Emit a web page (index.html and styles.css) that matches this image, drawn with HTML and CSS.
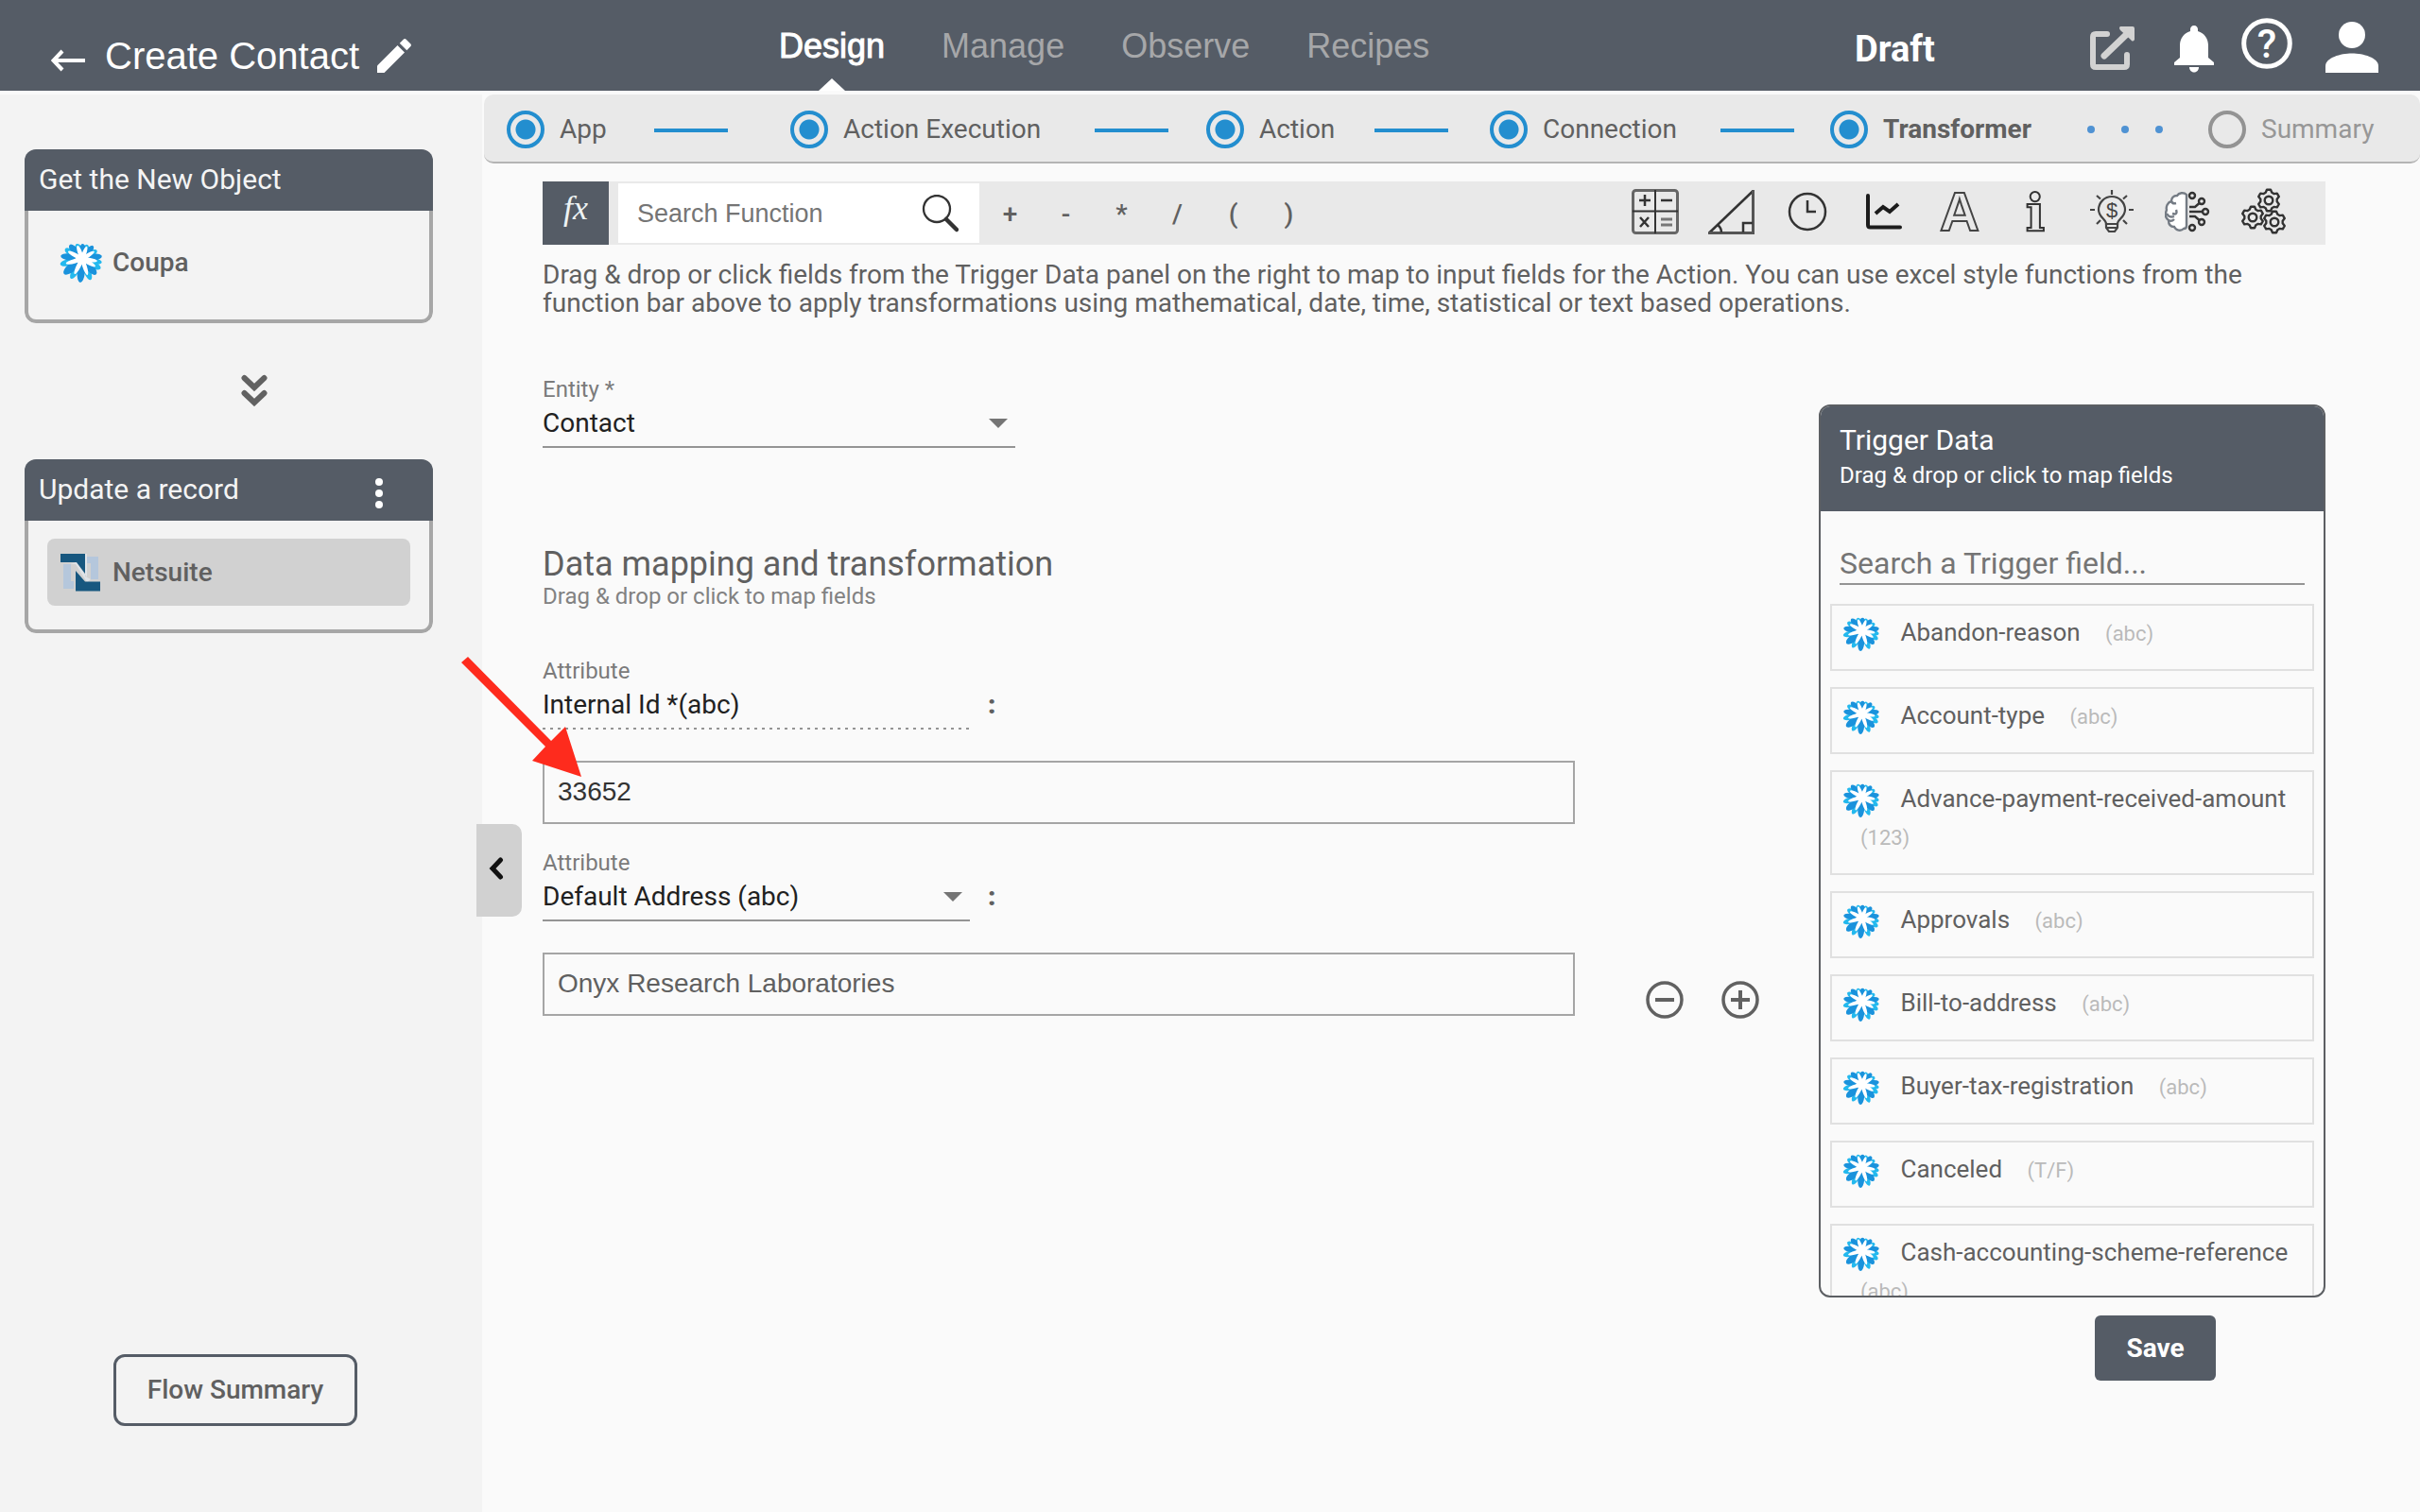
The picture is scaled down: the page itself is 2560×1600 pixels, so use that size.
FILE: index.html
```html
<!DOCTYPE html>
<html lang="en">
<head>
<meta charset="utf-8">
<title>Create Contact</title>
<link rel="stylesheet" href="styles.css">
</head>
<body>
<svg class="sprite" aria-hidden="true">
  <symbol id="coupa" viewBox="0 0 48 42">
    <g transform="translate(25 17)">
      <g fill="#23b9ee">
        <ellipse cy="-11" rx="3" ry="5" transform="rotate(20)"/>
        <ellipse cy="-12" rx="3" ry="6" transform="rotate(60)"/>
        <ellipse cy="-14" rx="3" ry="7" transform="rotate(100)"/>
        <ellipse cy="-14" rx="3.500" ry="8" transform="rotate(118)"/>
        <ellipse cy="-15" rx="3.500" ry="9" transform="rotate(158)"/>
        <ellipse cy="-15" rx="3.500" ry="9" transform="rotate(210)"/>
        <ellipse cy="-16" rx="3.500" ry="8" transform="rotate(256)"/>
        <ellipse cy="-14" rx="3.500" ry="7" transform="rotate(300)"/>
        <ellipse cy="-11" rx="3.500" ry="6" transform="rotate(340)"/>
      </g>
      <g fill="#1a92dc">
        <ellipse cy="-11" rx="3" ry="5" transform="rotate(2)"/>
        <ellipse cy="-12" rx="3" ry="6" transform="rotate(40)"/>
        <ellipse cy="-13" rx="3.500" ry="8" transform="rotate(82)"/>
        <ellipse cy="-13" rx="4" ry="9" transform="rotate(138)"/>
        <ellipse cy="-15" rx="4" ry="10" transform="rotate(185)"/>
        <ellipse cy="-15" rx="4.500" ry="10" transform="rotate(231)"/>
        <ellipse cy="-15" rx="3.500" ry="8" transform="rotate(278)"/>
        <ellipse cy="-13" rx="3.500" ry="7" transform="rotate(318)"/>
      </g>
      <g fill="#fff">
        <circle r="6"/>
        <ellipse cy="-6" rx="2.200" ry="8" transform="rotate(20)"/>
        <ellipse cy="-7" rx="2.200" ry="8" transform="rotate(58)"/>
        <ellipse cy="-7" rx="2.200" ry="9" transform="rotate(98)"/>
        <ellipse cy="-8" rx="2.300" ry="10" transform="rotate(162)"/>
        <ellipse cy="-7" rx="2.200" ry="9" transform="rotate(120)"/>
        <ellipse cy="-8" rx="2.300" ry="10" transform="rotate(207)"/>
        <ellipse cy="-8" rx="2.300" ry="10" transform="rotate(254)"/>
        <ellipse cy="-8" rx="2.300" ry="9" transform="rotate(298)"/>
        <ellipse cy="-7" rx="2.300" ry="8" transform="rotate(340)"/>
      </g>
    </g>
  </symbol>
  <symbol id="gear" viewBox="-13 -13 26 26">
    <path d="M2-11.3 3.3-8.2 5.4-6.9 8.8-7.4 10.8-3.9 8.7-1.2V1.2L10.8 3.9 8.8 7.4 5.4 6.9 3.3 8.2 2 11.3H-2L-3.3 8.2-5.4 6.9-8.8 7.4-10.8 3.9-8.7 1.2V-1.2L-10.8-3.9-8.8-7.4-5.4-6.9-3.3-8.2-2-11.3Z" fill="none" stroke="#333" stroke-width="2.400" stroke-linejoin="round"/>
    <circle r="4.3" fill="none" stroke="#333" stroke-width="2.400"/>
  </symbol>
</svg>

<header class="topbar">
  <div class="title-group">
    <a class="icon-link back" href="#" aria-label="Back"><svg width="36" height="24" viewBox="0 0 36 24"><path d="M36 12H3M12 2 2.500 12 12 22" fill="none" stroke="#fff" stroke-width="4"/></svg></a>
    <h1 class="title">Create Contact</h1>
    <button class="icon-button pencil" aria-label="Rename"><svg width="36" height="36" viewBox="0 0 36 36" fill="#fff"><path d="M0 28.500V36H7.500L29 14.500 21.500 7Z"/><path d="M35.200 8.300C36.200 7.300 36.200 6.300 35.200 5.300L30.700.8C29.700-.2 28.700-.2 27.700.8L23.800 4.700 31.300 12.200Z"/></svg></button>
  </div>
  <nav class="tabs">
    <a class="tab tab-active" href="#">Design</a>
    <a class="tab" href="#">Manage</a>
    <a class="tab" href="#">Observe</a>
    <a class="tab" href="#">Recipes</a>
  </nav>
  <div class="tools">
    <span class="status">Draft</span>
    <a class="icon-link open-link" href="#" aria-label="Open"><svg width="48" height="46" viewBox="0 0 48 46"><path d="M18 8H6Q3 8 3 11V40Q3 43 6 43H36Q39 43 39 40V30" fill="none" stroke="#d2d2d2" stroke-width="6" stroke-linecap="round"/><path d="M15 31 40 7" stroke="#d2d2d2" stroke-width="7" stroke-linecap="round"/><path d="M32 0H45Q47 0 47 2V14Q45 17 43 14L32 4Q30 1 32 0Z" fill="#d2d2d2"/></svg></a>
    <button class="icon-button bell" aria-label="Notifications"><svg width="42" height="50" viewBox="0 0 42 50" fill="#fff"><path d="M21 0C18.500 0 17 2 17 4V6C10 8 6 14 6 21V34L0 39V42H42V39L36 34V21C36 14 32 8 25 6V4C25 2 23.500 0 21 0Z"/><path d="M16 44H26C26 47 24 49.500 21 49.500S16 47 16 44Z"/></svg></button>
    <button class="icon-button help" aria-label="Help"><svg width="54" height="54" viewBox="0 0 54 54"><circle cx="27" cy="27" r="24.300" fill="none" stroke="#fff" stroke-width="5"/><text x="27" y="42" text-anchor="middle" class="help-mark">?</text></svg></button>
    <button class="icon-button user" aria-label="Account"><svg width="56" height="54" viewBox="0 0 56 54" fill="#fff"><circle cx="28" cy="14" r="14"/><path d="M0 54V47C0 38 16 33.500 28 33.500S56 38 56 47V54Z"/></svg></button>
  </div>
</header>

<div class="page">
  <aside class="sidebar">
    <section class="flow-card">
      <h2 class="flow-head">Get the New Object</h2>
      <div class="flow-body">
        <div class="app-chip"><svg class="app-logo" width="48" height="42"><use href="#coupa"/></svg>Coupa</div>
      </div>
    </section>
    <svg class="flow-arrow" width="28" height="34" viewBox="0 0 28 34"><path d="M3.500 4 14 14 24.500 4M3.500 20 14 30 24.500 20" fill="none" stroke="#616161" stroke-width="6" stroke-linecap="round"/></svg>
    <section class="flow-card">
      <h2 class="flow-head">Update a record
        <button class="icon-button menu" aria-label="Menu"><svg width="8" height="32" viewBox="0 0 8 32" fill="#fff"><circle cx="4" cy="4" r="4"/><circle cx="4" cy="16" r="4"/><circle cx="4" cy="28" r="4"/></svg></button>
      </h2>
      <div class="flow-body">
        <div class="app-chip app-chip-active"><svg class="app-logo" width="48" height="42" viewBox="-2 -1 48 42"><path d="M3 11H11V29H14V37H3ZM28 3H40V27H32V10H28Z" fill="#b5c7dc"/><path d="M10 11 16 11 28 30 32 27 26 24 26 0 28 0V25L17 9Z" fill="#dfe3e8"/><path d="M0 0H26V21L17 9H0ZM16 18 26 29.500H42V39.500H16Z" fill="#17577f"/></svg>Netsuite</div>
      </div>
    </section>
    <button class="summary-button">Flow Summary</button>
  </aside>

  <main class="main">
    <ol class="stepper">
      <li class="step"><span class="dot"></span>App</li>
      <li class="bar" aria-hidden="true"></li>
      <li class="step"><span class="dot"></span>Action Execution</li>
      <li class="bar" aria-hidden="true"></li>
      <li class="step"><span class="dot"></span>Action</li>
      <li class="bar" aria-hidden="true"></li>
      <li class="step"><span class="dot"></span>Connection</li>
      <li class="bar" aria-hidden="true"></li>
      <li class="step step-current"><span class="dot"></span>Transformer</li>
      <li class="pending" aria-hidden="true"><i></i><i></i><i></i></li>
      <li class="step step-todo"><span class="dot"></span>Summary</li>
    </ol>

    <div class="content">
      <div class="function-bar">
        <span class="fx">fx</span>
        <label class="function-search">
          <input type="text" placeholder="Search Function" aria-label="Search Function">
          <svg width="40" height="40" viewBox="0 0 40 40" fill="none" stroke="#333"><circle cx="17" cy="15" r="14" stroke-width="2.300"/><path d="M27 26 38 37" stroke-width="4.500" stroke-linecap="round"/></svg>
        </label>
        <div class="operators">
          <button>+</button><button>-</button><button>*</button><button>/</button><button>(</button><button>)</button>
        </div>
        <div class="categories">
          <button aria-label="Math"><svg width="50" height="48" viewBox="0 0 50 48" fill="none" stroke="#333" stroke-width="2"><rect x="1.500" y="1.500" width="47" height="45" rx="3" stroke="#666" stroke-width="3"/><path d="M25 1V47M1 23.500H49"/><path d="M8 12H20M14 6V18M31 12H43M9 30 18 40M18 30 9 40" stroke-width="2.500"/><path d="M31 32H43M31 38H43" stroke="#777" stroke-width="3"/></svg></button>
          <button aria-label="Trigonometry"><svg width="52" height="48" viewBox="0 0 52 48" fill="none" stroke="#333"><path d="M2 46.500 48.500 2" stroke-width="2.500"/><path d="M48.500 1V46.500H1" stroke="#555" stroke-width="3"/><path d="M38 46V36H48M11 38Q15 41 15 46" stroke-width="2.500"/></svg></button>
          <button aria-label="Date and time"><svg width="42" height="42" viewBox="0 0 42 42" fill="none" stroke="#333" stroke-width="2.500"><circle cx="21" cy="21" r="19"/><path d="M21 9V21H30"/></svg></button>
          <button aria-label="Statistics"><svg width="40" height="38" viewBox="0 0 40 38" fill="none" stroke="#1c1c1c" stroke-width="4" stroke-linecap="round"><path d="M3 2V33Q3 35.500 5.500 35.500H37"/><path d="M11 21 19 14 26 19 35 11" stroke-linecap="butt"/></svg></button>
          <button aria-label="Text"><svg width="50" height="66" viewBox="0 0 50 66"><text x="25" y="53" text-anchor="middle" class="letter-a">A</text></svg></button>
          <button aria-label="Information"><svg width="40" height="66" viewBox="0 0 40 66"><text x="20" y="53" text-anchor="middle" class="letter-i">i</text></svg></button>
          <button aria-label="Finance"><svg width="46" height="46" viewBox="0 0 46 46" fill="none" stroke="#444" stroke-width="2.200"><path d="M17 36C17 31 9 29 9 21A14 14 0 0 1 37 21C37 29 29 31 29 36Z"/><path d="M17 36V40L20 44H26L29 40V36M18 40H28M23 0V5M7 6 11 9.500M39 6 35 9.500M0 21H5M41 21H46M7 36 11 32M39 36 35 32"/><text x="23" y="29" text-anchor="middle" class="dollar">$</text></svg></button>
          <button aria-label="Intelligence"><svg width="48" height="44" viewBox="0 0 48 44" fill="none" stroke="#333" stroke-width="2.400"><path d="M23 4C20 1 15 2 13 5C9 5 7 8 7 11C3 12 1 17 2 20C0 25 1 29 4 31C4 35 6 38 10 38C12 42 17 43 20 40Q23 40 23 37Z" fill="#fff" stroke="#747b84"/><path d="M7 11Q8 14 12 13M2 24Q5 29 10 27M12 20Q14 26 8 24M10 30Q7 33 4 31" stroke="#747b84"/><circle cx="29" cy="5" r="3"/><circle cx="39" cy="11" r="3"/><circle cx="43" cy="22" r="3"/><circle cx="39" cy="33" r="3"/><circle cx="29" cy="39" r="3"/><path d="M26 17H32L36.500 13M26 22H40M26 27H32L36.500 31"/></svg></button>
          <button aria-label="Advanced"><svg width="50" height="50" viewBox="0 0 50 50"><use href="#gear" x="17" y="0" width="26" height="26"/><use href="#gear" x="0" y="18" width="26" height="26"/><use href="#gear" x="23" y="23" width="26" height="26"/></svg></button>
        </div>
      </div>
      <p class="hint">Drag &amp; drop or click fields from the Trigger Data panel on the right to map to input fields for the Action. You can use excel style functions from the function bar above to apply transformations using mathematical, date, time, statistical or text based operations.</p>

      <div class="columns">
        <form class="mapping">
          <div class="field field-wide">
            <label for="entity">Entity *</label>
            <div class="select"><select id="entity"><option>Contact</option></select></div>
          </div>
          <h2 class="section-title">Data mapping and transformation</h2>
          <p class="section-sub">Drag &amp; drop or click to map fields</p>

          <div class="attribute attribute-first">
            <div class="field">
              <label for="attr1">Attribute</label>
              <div class="select select-fixed"><select id="attr1" disabled><option>Internal Id *(abc)</option></select></div>
            </div>
            <span class="colon">:</span>
          </div>
          <div class="value-row">
            <input class="value value-dark" type="text" value="33652" aria-label="Internal Id value">
          </div>

          <div class="attribute">
            <div class="field">
              <label for="attr2">Attribute</label>
              <div class="select"><select id="attr2"><option>Default Address (abc)</option></select></div>
            </div>
            <span class="colon">:</span>
          </div>
          <div class="value-row">
            <input class="value" type="text" value="Onyx Research Laboratories" aria-label="Default Address value">
            <div class="row-actions">
              <button type="button" class="icon-button" aria-label="Remove"><svg width="40" height="40" viewBox="0 0 40 40" fill="none" stroke="#616161"><circle cx="20" cy="20" r="18" stroke-width="3.500"/><path d="M10 20H30" stroke-width="4"/></svg></button>
              <button type="button" class="icon-button" aria-label="Add"><svg width="40" height="40" viewBox="0 0 40 40" fill="none" stroke="#616161"><circle cx="20" cy="20" r="18" stroke-width="3.500"/><path d="M10 20H30M20 10V30" stroke-width="4"/></svg></button>
            </div>
          </div>
        </form>

        <div class="trigger-column">
          <section class="trigger">
            <header class="trigger-head">
              <h2>Trigger Data</h2>
              <p>Drag &amp; drop or click to map fields</p>
            </header>
            <input class="trigger-search" type="text" placeholder="Search a Trigger field..." aria-label="Search a Trigger field">
            <ul class="trigger-list">
              <li><svg width="42" height="36"><use href="#coupa"/></svg> <span>Abandon-reason</span> <small>(abc)</small></li>
              <li><svg width="42" height="36"><use href="#coupa"/></svg> <span>Account-type</span> <small>(abc)</small></li>
              <li><svg width="42" height="36"><use href="#coupa"/></svg> <span>Advance-payment-received-amount</span> <small>(123)</small></li>
              <li><svg width="42" height="36"><use href="#coupa"/></svg> <span>Approvals</span> <small>(abc)</small></li>
              <li><svg width="42" height="36"><use href="#coupa"/></svg> <span>Bill-to-address</span> <small>(abc)</small></li>
              <li><svg width="42" height="36"><use href="#coupa"/></svg> <span>Buyer-tax-registration</span> <small>(abc)</small></li>
              <li><svg width="42" height="36"><use href="#coupa"/></svg> <span>Canceled</span> <small>(T/F)</small></li>
              <li><svg width="42" height="36"><use href="#coupa"/></svg> <span>Cash-accounting-scheme-reference</span> <small>(abc)</small></li>
            </ul>
          </section>
          <button class="save">Save</button>
        </div>
      </div>
    </div>

    <button class="collapse" aria-label="Collapse sidebar"><svg width="16" height="24" viewBox="0 0 16 24"><path d="M12.500 3 4 12 12.500 21" fill="none" stroke="#111" stroke-width="5" stroke-linecap="round"/></svg></button>
    <svg class="pointer" width="127" height="127" viewBox="0 0 127 127"><path d="M0 6 7 0 95 89 110 74 127 127 75 110 89 95Z" fill="#fe2b1d"/></svg>
  </main>
</div>
</body>
</html>
```
FILE: styles.css
```css
* { box-sizing: border-box; }

body {
  margin: 0;
  min-height: 100vh;
  display: flex;
  flex-direction: column;
  background: #fafafa;
  color: #606060;
  font: 28px/32px Roboto, sans-serif;
}

h1, h2, p, ol, ul { margin: 0; padding: 0; font-weight: 400; }
ol, ul { list-style: none; }
button, input, select { font: inherit; color: inherit; }
button { border: 0; background: none; padding: 0; }
a { color: inherit; text-decoration: none; }
svg { display: block; }
input, select { min-width: 0; outline: 0; border-radius: 0; }
.sprite { position: absolute; width: 0; height: 0; }

/* Top bar */
.topbar {
  display: grid;
  grid-template-columns: 824fr 1138fr 598fr;
  height: 96px;
  margin-bottom: 4px;
  background: #555c66;
  color: #fff;
}
.title-group { display: flex; align-items: center; padding: 22px 0 0 54px; }
.title { margin: 0 19px 0 21px; font: 40px/44px "Liberation Sans", sans-serif; }
.back { padding-top: 10px; }
.tabs { display: flex; gap: 60px; font: 36px/98px "Liberation Sans", sans-serif; }
.tab { height: 96px; color: #a6a7a9; }
.tab-active { position: relative; color: #fff; -webkit-text-stroke: 1px #fff; }
.tab-active::after {
  content: "";
  position: absolute;
  left: 50%;
  bottom: 0;
  margin-left: -14px;
  border: 14px solid transparent;
  border-top: 0;
  border-bottom: 13px solid #fff;
}
.tools { display: flex; align-items: flex-start; padding-right: 44px; }
.status { font-size: 38px; line-height: 44px; font-weight: 700; margin: 30px auto 0 0; }
.open-link { margin: 28px 41px 0 0; }
.bell { margin: 27px 29px 0 0; }
.help { margin: 19px 35px 0 0; }
.user { margin-top: 23px; }
.help-mark { font: 500 42px Roboto, sans-serif; fill: #fff; }

/* Frame */
.page { flex: 1; display: grid; grid-template-columns: 510px 1fr; }

.sidebar {
  display: flex;
  flex-direction: column;
  padding: 58px 52px 91px 26px;
  background: #f3f3f3;
}
.flow-card { border-radius: 12px; overflow: hidden; }
.flow-head {
  display: flex;
  justify-content: space-between;
  padding: 16px 53px 17px 15px;
  background: #555c66;
  color: #f4f4f4;
  font-size: 30px;
  line-height: 32px;
}
.menu { padding-top: 4px; height: 32px; }
.flow-body {
  padding: 19px 20px 25px;
  border: 4px solid #a6a6a6;
  border-top: 0;
  border-radius: 0 0 12px 12px;
}
.app-chip {
  display: flex;
  align-items: center;
  gap: 9px;
  height: 71px;
  padding: 1px 12px 0;
  border-radius: 8px;
  font-weight: 500;
}
.app-chip-active { background: #d1d1d1; }
.flow-arrow { margin: 54px 0 56px 229px; }
.summary-button {
  align-self: center;
  width: 258px;
  height: 76px;
  margin: auto 0 0 14px;
  border: 3px solid #555c66;
  border-radius: 12px;
  font-weight: 500;
}

/* Stepper */
.main { position: relative; }
.stepper {
  display: grid;
  grid-template-columns: 156fr 144fr 322fr 118fr 178fr 122fr 244fr 116fr 272fr 128fr 224fr;
  align-items: center;
  height: 73px;
  margin-left: 2px;
  padding: 2px 0 0 24px;
  border-bottom: 2px solid #b4b4b4;
  border-radius: 10px;
  background: #e9e9e9;
}
.step { display: flex; align-items: center; gap: 16px; white-space: nowrap; }
.dot {
  width: 40px;
  height: 40px;
  border: 4px solid #238ecf;
  border-radius: 50%;
  background: radial-gradient(circle, #238ecf 10px, transparent 11px);
}
.bar { width: 78px; height: 4px; margin-top: 3px; background: #238ecf; }
.step-current { font-weight: 700; }
.pending { display: flex; gap: 28px; }
.pending i { width: 8px; height: 8px; border-radius: 50%; background: #4f92d3; }
.step-todo { color: #979797; }
.step-todo .dot { border-color: #939393; background: none; }

/* Function bar */
.content { padding: 19px 100px 0 64px; }
.function-bar { display: flex; height: 67px; background: #e9e9e9; }
.fx {
  width: 70px;
  background: #555c66;
  color: #eef3f4;
  font: italic 36px/56px "Liberation Serif", serif;
  text-align: center;
}
.function-search {
  display: flex;
  align-items: center;
  width: 382px;
  margin: 2px 3px 2px 10px;
  padding: 0 22px 0 20px;
  background: #fff;
}
.function-search input {
  flex: 1;
  padding: 0;
  border: 0;
  background: none;
  font: 27px/32px "Liberation Sans", sans-serif;
}
.function-search input::placeholder { color: #757575; opacity: 1; }
.operators { display: flex; padding-top: 2px; }
.operators button { width: 59px; font-weight: 500; }
.categories { display: flex; width: 724px; margin: 0 25px 0 auto; padding-bottom: 3px; }
.categories button { flex: 1; height: 64px; display: flex; align-items: center; justify-content: center; }
.letter-a { font: 700 58px "Liberation Sans", sans-serif; fill: none; stroke: #444; stroke-width: 2px; }
.letter-i { font: 700 54px "DejaVu Serif", serif; fill: none; stroke: #333; stroke-width: 2px; }
.dollar { font: 22px "Liberation Sans", sans-serif; fill: #444; stroke: none; }
.hint { margin-top: 17px; line-height: 30px; }

/* Mapping form */
.columns { display: grid; grid-template-columns: 1fr 536px; margin-top: 62px; }
.field { width: 452px; }
.field-wide { width: 500px; }
.field label { display: block; font-size: 24px; line-height: 28px; color: #7b7b7b; }
.select { position: relative; }
.select select {
  display: block;
  width: 100%;
  height: 48px;
  padding: 2px 0 4px;
  border: 0;
  border-bottom: 2px solid #949494;
  background: none;
  appearance: none;
  color: #212121;
  opacity: 1;
}
.select::after {
  content: "";
  position: absolute;
  top: 17px;
  right: 8px;
  border: 10px solid transparent;
  border-top-color: #757575;
  border-bottom: 0;
}
.select-fixed::after { display: none; }
.select-fixed select {
  border-bottom: 0;
  padding-bottom: 6px;
  background: repeating-linear-gradient(90deg, #949494 0 3px, transparent 3px 8px) bottom / 100% 2px no-repeat;
}
.section-title { margin-top: 103px; font-size: 36px; line-height: 40px; }
.section-sub { font-size: 24px; line-height: 28px; color: #828282; }
.attribute { display: flex; align-items: flex-end; gap: 19px; margin-top: 27px; }
.attribute-first { margin-top: 51px; }
.colon { padding-bottom: 10px; font-weight: 900; }
.value-row { display: flex; justify-content: space-between; margin-top: 33px; padding-right: 63px; }
.value {
  flex: 0 1 1092px;
  height: 67px;
  padding: 0 14px 2px;
  border: 2px solid #a5a5a5;
  background: none;
  font-family: "Liberation Sans", sans-serif;
}
.value-dark { color: #333; }
.row-actions { display: flex; gap: 40px; margin-top: 30px; }

/* Trigger data */
.trigger-column { display: flex; flex-direction: column; margin-top: 30px; }
.trigger {
  display: flex;
  flex-direction: column;
  height: 945px;
  border: 2px solid #5c5f63;
  border-radius: 12px;
  overflow: hidden;
}
.trigger-head { padding: 18px 20px 24px; background: #555c66; color: #fff; }
.trigger-head h2 { font-size: 30px; line-height: 36px; }
.trigger-head p { margin-top: 5px; font-size: 24px; line-height: 28px; }
.trigger-search {
  margin: 35px 20px 20px;
  padding: 0 0 1px;
  border: 0;
  border-bottom: 2px solid #949494;
  background: none;
  font-size: 32px;
  line-height: 40px;
  height: 43px;
}
.trigger-search::placeholder { color: #757575; opacity: 1; }
.trigger-list {
  flex: 1;
  display: flex;
  flex-direction: column;
  gap: 17px;
  padding: 0 10px;
  overflow-y: auto;
  scrollbar-width: none;
}
.trigger-list li {
  flex: none;
  padding: 8px 10px 17px;
  border: 2px solid #e0e0e0;
  font-size: 26px;
  line-height: 40px;
}
.trigger-list svg { display: inline-block; vertical-align: middle; margin-right: 14px; }
.trigger-list span { white-space: nowrap; }
.trigger-list small { display: inline-block; margin-left: 20px; font-size: 22px; color: #bababa; }
.save {
  align-self: flex-end;
  width: 128px;
  height: 69px;
  margin: 19px 116px 0 0;
  border-radius: 6px;
  background: #555c66;
  color: #fff;
  font-weight: 700;
}

/* Overlays */
.collapse {
  position: absolute;
  left: -6px;
  top: 772px;
  display: flex;
  align-items: center;
  width: 48px;
  height: 98px;
  padding: 0 0 4px 13px;
  border-radius: 0 10px 10px 0;
  background: #d1d1d1;
}
.pointer { position: absolute; left: -22px; top: 595px; }
```
